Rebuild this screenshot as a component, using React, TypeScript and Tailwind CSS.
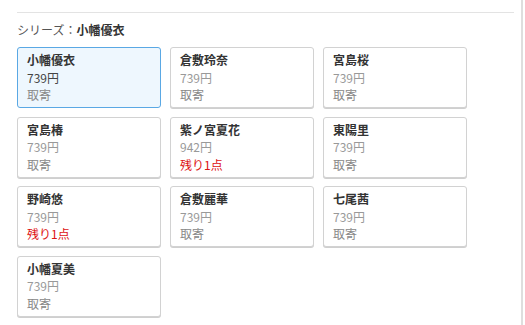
import React from "react";

type Item = {
  name: string;
  price: string;
  status: string;
  low?: boolean;
  selected?: boolean;
};

const items: Item[] = [
  { name: "小幡優衣", price: "739円", status: "取寄", selected: true },
  { name: "倉敷玲奈", price: "739円", status: "取寄" },
  { name: "宮島桜", price: "739円", status: "取寄" },
  { name: "宮島椿", price: "739円", status: "取寄" },
  { name: "紫ノ宮夏花", price: "942円", status: "残り1点", low: true },
  { name: "東陽里", price: "739円", status: "取寄" },
  { name: "野崎悠", price: "739円", status: "残り1点", low: true },
  { name: "倉敷麗華", price: "739円", status: "取寄" },
  { name: "七尾茜", price: "739円", status: "取寄" },
  { name: "小幡夏美", price: "739円", status: "取寄" },
];

function VariantCard({ item }: { item: Item }) {
  return (
    <div
      className={
        item.selected
          ? "h-[61px] rounded-[3px] border border-[#5aa8e4] bg-[#eef7fe] pl-[9px] pt-[3px] text-[12px] leading-[17.5px]"
          : "h-[61px] rounded-[3px] border border-[#d2d2d2] bg-white pl-[9px] pt-[3px] text-[12px] leading-[17.5px] shadow-[0_1px_0_#cfcfcf]"
      }
    >
      <div className="font-bold text-[#333]">{item.name}</div>
      <div className={item.selected ? "text-[#444]" : "text-[#999]"}>{item.price}</div>
      <div className={item.low ? "text-[#dd1111]" : "text-[#888]"}>{item.status}</div>
    </div>
  );
}

export default function App() {
  return (
    <div
      className="flex h-[325px] w-[525px] bg-white"
      style={{ fontFamily: '"Noto Sans CJK JP", "Noto Sans", sans-serif' }}
    >
      <div className="w-[521px] px-[17px] pt-[12px]">
        <div className="w-[497px] border-t border-[#e3e3e3]" />
        <div className="mt-[8px] text-[12px] leading-[18px]">
          <span className="text-[#555]">シリーズ：</span>
          <span className="font-bold text-[#333]">小幡優衣</span>
        </div>
        <div className="mt-[8px] grid grid-cols-[144px_144px_144px] gap-x-[9px] gap-y-[8.5px]">
          {items.map((item) => (
            <VariantCard key={item.name} item={item} />
          ))}
        </div>
      </div>
      <div className="w-[2px] bg-[#dedede]" />
    </div>
  );
}
